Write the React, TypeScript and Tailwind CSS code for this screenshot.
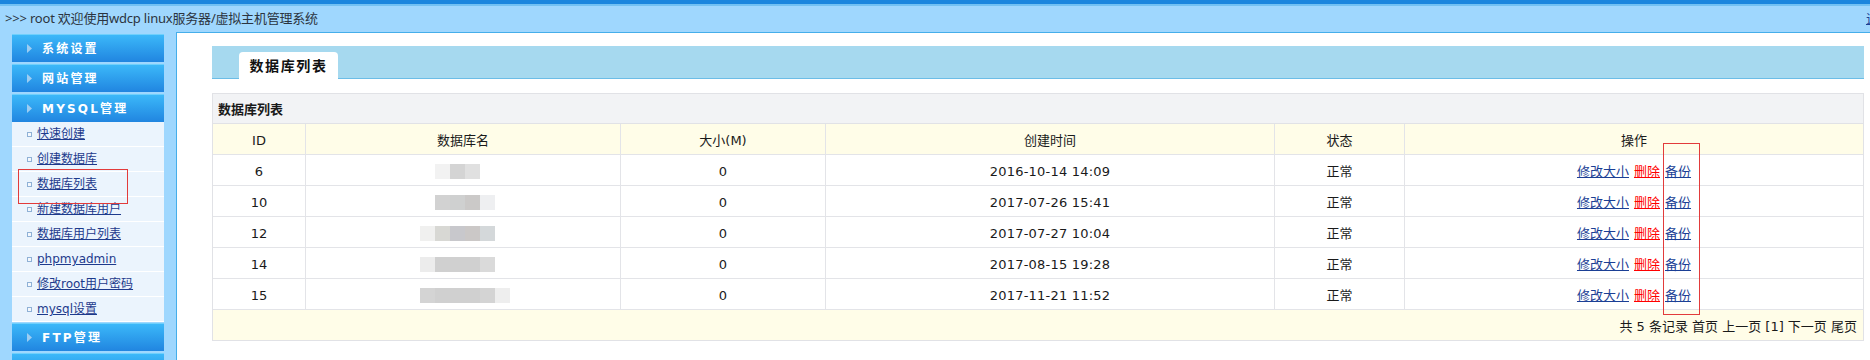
import React from "react";

const rows = [
  { id: "6", pl: "pl-[129px]", blocks: ["#f2f2f2", "#d4d4d4", "#e0e0e0"], time: "2016-10-14 14:09" },
  { id: "10", pl: "pl-[129px]", blocks: ["#d2d2d2", "#cfd0d0", "#cbc9c8", "#eeeff1"], time: "2017-07-26 15:41" },
  { id: "12", pl: "pl-[114px]", blocks: ["#f0f0ef", "#d8d8d4", "#c8c8cc", "#cbc8c7", "#d4d8da"], time: "2017-07-27 10:04" },
  { id: "14", pl: "pl-[114px]", blocks: ["#ececec", "#d0d0d0", "#d0d0d0", "#d0d0d0", "#dadada"], time: "2017-08-15 19:28" },
  { id: "15", pl: "pl-[114px]", blocks: ["#d4d4d4", "#d0d0d0", "#d0d0d0", "#d0d0d0", "#d4d4d4", "#eeeeee"], time: "2017-11-21 11:52" },
];

const subItems = ["快速创建", "创建数据库", "数据库列表", "新建数据库用户", "数据库用户列表", "phpmyadmin", "修改root用户密码", "mysql设置"];

function Bar({ label }: { label: string }) {
  return (
    <div className="h-[28px] w-[152px] flex items-center bg-gradient-to-b from-[#3cb8f9] to-[#2185e0] border-t border-[#6fd0fc]">
      <svg width="6" height="9" viewBox="0 0 6 9" className="ml-[15px]">
        <polygon points="0,0 5,4.5 0,9" fill="#9dcdf2" />
      </svg>
      <span className="ml-[9px] text-white font-bold text-[12px] tracking-[2.2px]">{label}</span>
    </div>
  );
}

const cell = "flex items-center justify-center border-r border-[#e3e4e8] shrink-0 pt-[3px]";

export default function App() {
  return (
    <div
      className="relative w-[1870px] h-[360px] overflow-hidden bg-[#9fd7fe]"
      style={{ fontFamily: '"DejaVu Sans", "Noto Sans CJK SC", sans-serif' }}
    >
      {/* top bars */}
      <div className="h-[4px] bg-[#1b86de]" />
      <div className="h-[2px] bg-[#72c1f3]" />
      <div
        className="h-[26px] flex items-center justify-between text-[13px] text-[#2b3440]"
        style={{ fontFamily: '"Noto Sans", "Noto Sans CJK SC", sans-serif' }}
      >
        <span className="ml-[5px] tracking-[-0.2px]">&gt;&gt;&gt; root 欢迎使用wdcp linux服务器/虚拟主机管理系统</span>
        <span className="mr-[-22px] underline text-[#1b3f95]">退出</span>
      </div>

      <div className="flex">
        {/* sidebar */}
        <div className="w-[176px] shrink-0 pl-[12px] pt-[2px] flex flex-col">
          <Bar label="系统设置" />
          <div className="h-[2px]" />
          <Bar label="网站管理" />
          <div className="h-[2px]" />
          <Bar label="MYSQL管理" />
          <div className="w-[152px] bg-[#ebf4fd]">
            {subItems.map((s) => (
              <div key={s} className="h-[25px] flex items-center border-b border-white">
                <span className="ml-[15px] w-[5px] h-[5px] border border-[#8fb1d6] bg-[#f4f8fd]" />
                <span className="ml-[5px] text-[12px] text-[#1d3a8c] underline">{s}</span>
              </div>
            ))}
          </div>
          <div className="h-[1px]" />
          <Bar label="FTP管理" />
          <div className="h-[2px]" />
          <Bar label="" />
        </div>

        {/* content */}
        <div className="flex-1 bg-white border-l border-t border-[#45aeea] pl-[35px] pt-[13px] h-[328px]">
          <div className="w-[1652px] h-[33px] bg-[#a6d9ef] border-b border-[#6cbde7] flex items-end">
            <div className="ml-[27px] w-[99px] h-[27px] mb-[-1px] bg-white rounded-t-[4px] flex items-center justify-center pt-[1px]">
              <span className="text-[14px] font-bold tracking-[1.6px] text-[#111]">数据库列表</span>
            </div>
          </div>

          <div className="mt-[14px] w-[1652px] border border-[#e1e2e6] text-[13px] text-[#1a1a1a]">
            <div className="h-[30px] bg-[#f2f3f5] border-b border-[#e1e2e6] flex items-center pl-[5px] pt-[2px] font-bold">
              数据库列表
            </div>
            <div className="h-[31px] flex bg-[#fffde8] border-b border-[#e3e4e8]">
              <div className={`${cell} w-[93px]`}>ID</div>
              <div className={`${cell} w-[315px]`}>数据库名</div>
              <div className={`${cell} w-[205px]`}>大小(M)</div>
              <div className={`${cell} w-[449px]`}>创建时间</div>
              <div className={`${cell} w-[130px]`}>状态</div>
              <div className="flex items-center justify-center w-[458px] pt-[3px]">操作</div>
            </div>
            {rows.map((r) => (
              <div key={r.id} className="h-[31px] flex bg-white border-b border-[#e3e4e8]">
                <div className={`${cell} w-[93px]`}>{r.id}</div>
                <div className={`flex items-center border-r border-[#e3e4e8] shrink-0 w-[315px] pt-[2px] ${r.pl}`}>
                  {r.blocks.map((c, i) => (
                    <div key={i} className="w-[15px] h-[15px]" style={{ backgroundColor: c }} />
                  ))}
                </div>
                <div className={`${cell} w-[205px]`}>0</div>
                <div className={`${cell} w-[449px] tracking-[0.2px]`}>{r.time}</div>
                <div className={`${cell} w-[130px]`}>正常</div>
                <div className="flex items-center justify-center w-[458px] gap-[5px] pt-[3px]">
                  <a className="underline text-[#1b3f95]">修改大小</a>
                  <a className="underline text-[#ff0000]">删除</a>
                  <a className="underline text-[#1b3f95]">备份</a>
                </div>
              </div>
            ))}
            <div className="h-[30px] bg-[#fffde8] flex items-center justify-end pr-[6px] pt-[3px]">
              共 5 条记录 首页 上一页 [1] 下一页 尾页
            </div>
          </div>
        </div>
      </div>

      {/* red annotation boxes */}
      <div className="absolute left-[18px] top-[169px] w-[110px] h-[35px] border border-[#e23b3b]" />
      <div className="absolute left-[1663px] top-[143px] w-[37px] h-[172px] border border-[#e23b3b]" />
    </div>
  );
}
